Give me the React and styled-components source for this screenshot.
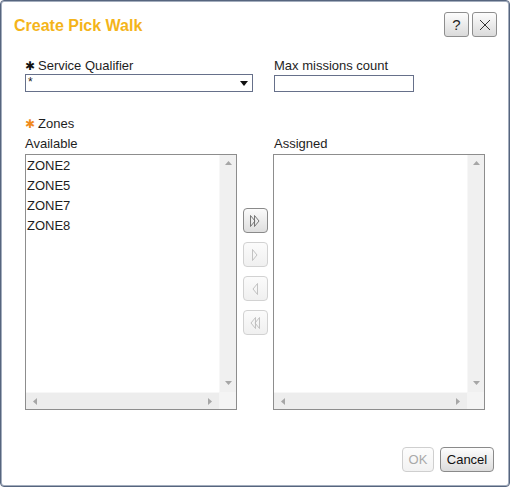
import styled, { createGlobalStyle } from "styled-components";

const GlobalStyle = createGlobalStyle`
  html, body {
    margin: 0;
    padding: 0;
    background: #ffffff;
  }
  body {
    font-family: "Liberation Sans", Arial, sans-serif;
    font-size: 13px;
    color: #1e1e1e;
  }
`;

const available = ["ZONE2", "ZONE5", "ZONE7", "ZONE8"];

function Arrow({ dir, color = "#a6a6a6" }) {
  const pts = {
    up: "0,4 3.5,0 7,4",
    down: "0,0 3.5,4 7,0",
    left: "4,0 0,3.5 4,7",
    right: "0,0 4,3.5 0,7",
  }[dir];
  const vertical = dir === "up" || dir === "down";
  return (
    <svg width={vertical ? 7 : 4} height={vertical ? 4 : 7} viewBox={vertical ? "0 0 7 4" : "0 0 4 7"}>
      <polygon points={pts} fill={color} />
    </svg>
  );
}

/** 이동 버튼 아이콘: 오른쪽/왼쪽, 한 개/두 개 */
function MoveIcon({ kind, color }) {
  const shapes = {
    allRight: ["1.5,0.5 6,6 1.5,11.5", "5.5,0.5 10,6 5.5,11.5"],
    right: ["3.5,0.5 8,6 3.5,11.5"],
    left: ["8.5,0.5 4,6 8.5,11.5"],
    allLeft: ["10.5,0.5 6,6 10.5,11.5", "6.5,0.5 2,6 6.5,11.5"],
  }[kind];
  return (
    <svg width="12" height="12" viewBox="0 0 12 12">
      {shapes.map((p) => (
        <polygon key={p} points={p} fill="none" stroke={color} strokeWidth="0.9" strokeLinejoin="miter" />
      ))}
    </svg>
  );
}

function ListBox({ items }) {
  return (
    <List>
      <ListContent>
        {items.map((z) => (
          <ListItem key={z}>{z}</ListItem>
        ))}
      </ListContent>
      <VScroll>
        <Arrow dir="up" />
        <Arrow dir="down" />
      </VScroll>
      <HScroll>
        <Arrow dir="left" />
        <Arrow dir="right" />
      </HScroll>
      <Corner />
    </List>
  );
}

export default function App() {
  return (
    <>
      <GlobalStyle />
      <Dialog>
        <Header>
          <Title>Create Pick Walk</Title>
          <HeaderButtons>
            <ToolButton>?</ToolButton>
            <ToolButton>
              <svg width="12" height="12" viewBox="0 0 12 12">
                <path d="M1 1 L11 11 M11 1 L1 11" stroke="#333" strokeWidth="1" />
              </svg>
            </ToolButton>
          </HeaderButtons>
        </Header>

        <Body>
          <FieldRow>
            <Field width={228}>
              <Label>
                <Star>✱</Star>Service Qualifier
              </Label>
              <Select>
                <span>*</span>
                <svg width="8" height="5" viewBox="0 0 8 5">
                  <polygon points="0,0 8,0 4,5" fill="#111" />
                </svg>
              </Select>
            </Field>
            <Field width={140}>
              <Label>Max missions count</Label>
              <TextInput />
            </Field>
          </FieldRow>

          <ZonesLabel>
            <Star orange>✱</Star>Zones
          </ZonesLabel>

          <Columns>
            <Column>
              <SubLabel>Available</SubLabel>
              <ListBox items={available} />
            </Column>
            <MoveColumn>
              <MoveButton>
                <MoveIcon kind="allRight" color="#6a6a6a" />
              </MoveButton>
              <MoveButton disabled>
                <MoveIcon kind="right" color="#bcbcbc" />
              </MoveButton>
              <MoveButton disabled>
                <MoveIcon kind="left" color="#bcbcbc" />
              </MoveButton>
              <MoveButton disabled>
                <MoveIcon kind="allLeft" color="#bcbcbc" />
              </MoveButton>
            </MoveColumn>
            <Column>
              <SubLabel indent>Assigned</SubLabel>
              <ListBox items={[]} />
            </Column>
          </Columns>
        </Body>

        <Footer>
          <FooterButton disabled width={32}>OK</FooterButton>
          <FooterButton width={54}>Cancel</FooterButton>
        </Footer>
      </Dialog>
    </>
  );
}

const Dialog = styled.div`
  box-sizing: border-box;
  width: 510px;
  height: 487px;
  border: 1px solid #56657e;
  border-radius: 4px;
  box-shadow: inset 0 0 0 1px #a3adbd;
  background: #ffffff;
  display: flex;
  flex-direction: column;
  overflow: hidden;
`;

const Header = styled.div`
  display: flex;
  justify-content: space-between;
  align-items: flex-start;
  padding: 11px 12px 0 13px;
`;

const Title = styled.div`
  margin-top: 5px;
  font-size: 16px;
  line-height: 18px;
  font-weight: bold;
  color: #f4b41a;
`;

const HeaderButtons = styled.div`
  display: flex;
  gap: 3px;
`;

const ToolButton = styled.div`
  box-sizing: border-box;
  width: 25px;
  height: 25px;
  border: 1px solid #8e8e8e;
  border-radius: 3px;
  background: linear-gradient(#fdfdfd, #dadada);
  display: flex;
  align-items: center;
  justify-content: center;
  font-size: 15px;
  color: #222;
`;

const Body = styled.div`
  padding-left: 24px;
`;

const FieldRow = styled.div`
  display: flex;
  gap: 21px;
  margin-top: 21px;
`;

const Field = styled.div`
  width: ${({ width }) => width}px;
  display: flex;
  flex-direction: column;
`;

const Label = styled.div`
  line-height: 15px;
  height: 15px;
  white-space: nowrap;
`;

const Star = styled.span`
  display: inline-block;
  width: 13px;
  font-family: "DejaVu Sans", sans-serif;
  font-size: 12px;
  color: ${({ orange }) => (orange ? "#f08a1c" : "#111")};
`;

const Select = styled.div`
  box-sizing: border-box;
  margin-top: 1px;
  height: 18px;
  border: 1px solid #66708a;
  display: flex;
  justify-content: space-between;
  align-items: center;
  padding: 0 4px 0 2px;
  font-size: 12px;
  span {
    align-self: flex-start;
    line-height: 14px;
  }
`;

const TextInput = styled.div`
  box-sizing: border-box;
  margin-top: 2px;
  height: 17px;
  border: 1px solid #66708a;
`;

const ZonesLabel = styled(Label)`
  margin-top: 24px;
`;

const Columns = styled.div`
  display: flex;
  margin-top: 5px;
`;

const Column = styled.div`
  width: 212px;
  display: flex;
  flex-direction: column;
`;

const SubLabel = styled.div`
  line-height: 15px;
  height: 15px;
  padding-left: ${({ indent }) => (indent ? 1 : 0)}px;
`;

const List = styled.div`
  box-sizing: border-box;
  margin-top: 3px;
  height: 256px;
  border: 1px solid #8d8d8d;
  display: grid;
  grid-template-columns: 1fr 17px;
  grid-template-rows: 1fr 17px;
`;

const ListContent = styled.div`
  padding: 1px 0 0 1px;
`;

const ListItem = styled.div`
  line-height: 20px;
  height: 20px;
`;

const VScroll = styled.div`
  background: #f0f0f0;
  border-left: 1px solid #f7f7f7;
  display: flex;
  flex-direction: column;
  justify-content: space-between;
  align-items: center;
  padding: 6px 0 7px;
`;

const HScroll = styled.div`
  background: #ededed;
  border-top: 1px solid #f7f7f7;
  display: flex;
  justify-content: space-between;
  align-items: center;
  padding: 0 7px 0 7px;
`;

const Corner = styled.div`
  background: #f4f4f4;
`;

const MoveColumn = styled.div`
  width: 36px;
  display: flex;
  flex-direction: column;
  align-items: center;
  gap: 9px;
  padding-top: 72px;
`;

const MoveButton = styled.div`
  box-sizing: border-box;
  width: 25px;
  height: 25px;
  border-radius: 4px;
  border: 1px solid ${({ disabled }) => (disabled ? "#d2d2d2" : "#8a8a8a")};
  background: ${({ disabled }) =>
    disabled ? "linear-gradient(#fbfbfb, #f0f0f0)" : "linear-gradient(#fbfbfb, #dedede)"};
  display: flex;
  align-items: center;
  justify-content: center;
`;

const Footer = styled.div`
  margin-top: auto;
  display: flex;
  justify-content: flex-end;
  gap: 6px;
  padding: 0 15px 14px 0;
`;

const FooterButton = styled.div`
  box-sizing: border-box;
  width: ${({ width }) => width}px;
  height: 25px;
  border-radius: 4px;
  border: 1px solid ${({ disabled }) => (disabled ? "#cfcfcf" : "#8a8a8a")};
  background: ${({ disabled }) =>
    disabled ? "linear-gradient(#fdfdfd, #f2f2f2)" : "linear-gradient(#fdfdfd, #dcdcdc)"};
  color: ${({ disabled }) => (disabled ? "#a9a9a9" : "#111")};
  font-size: 13px;
  display: flex;
  align-items: center;
  justify-content: center;
`;
